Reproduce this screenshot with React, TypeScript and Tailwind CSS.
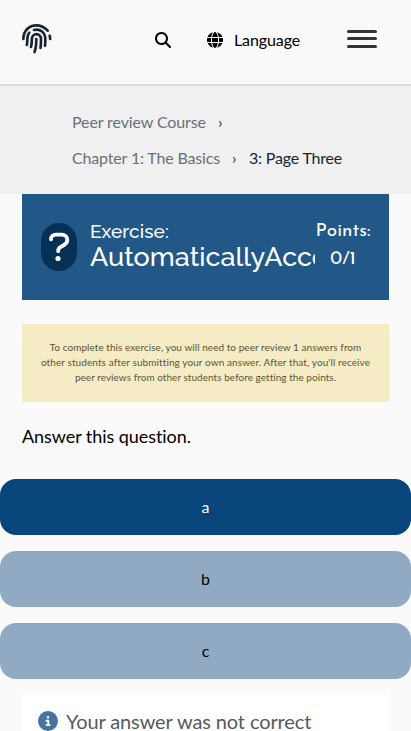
import { FaMagnifyingGlass, FaGlobe, FaCircleInfo } from "react-icons/fa6";

const choices = [
  { label: "a", selected: true },
  { label: "b", selected: false },
  { label: "c", selected: false },
];

function Fingerprint() {
  return (
    <svg
      viewBox="63 69 93 93"
      className="mt-[23px] ml-[21px] size-[31px] text-[#1a2333]"
      fill="none"
      stroke="currentColor"
      strokeWidth="8"
      strokeLinecap="round"
      strokeLinejoin="round"
    >
      <path d="M70 117C70 92 88 76 109 76C123 76 134 82 143 92" />
      <path d="M149 107C150 110 150.500 114 150.500 117" />
      <path d="M88 98C83 104 82 110 82 117C82 125 82 129 80.500 135" />
      <path d="M102 90C121 85 136 98 136 118C136 126 136 131 135 137" />
      <path d="M93 141C95 134 95.500 127 95.500 118C95.500 97 123 97 123 118C123 129 123 136 121.500 144" />
      <path d="M109 117C109 134 108 145 103.500 156" />
    </svg>
  );
}

function Header() {
  return (
    <header className="flex h-[86px] items-start border-b-2 border-[#dcdcdc] bg-[#f9f9f9] text-black">
      <Fingerprint />
      <FaMagnifyingGlass className="mt-8 ml-[103px] size-4" />
      <div className="mt-7 ml-9 flex h-6 items-center">
        <FaGlobe className="size-4" />
        <span className="ml-[11px] w-[66px] tracking-[-0.1px] whitespace-nowrap">Language</span>
      </div>
      <div className="mt-[30px] ml-[47px] flex w-[30px] flex-col">
        <span className="h-[3px] rounded-full bg-[#333333]" />
        <span className="mt-1 h-[3px] rounded-full bg-[#333333]" />
        <span className="mt-[5px] h-[3px] rounded-full bg-[#333333]" />
      </div>
    </header>
  );
}

function Breadcrumbs() {
  return (
    <nav className="h-[108px] bg-[#f0f0f0] pt-[18px] pl-[72px] leading-9 text-[#687078]">
      <div className="flex">
        <span className="w-[134px] tracking-[-0.11px] whitespace-nowrap">Peer review Course</span>
        <span className="ml-3 text-[#333]">›</span>
      </div>
      <div className="flex">
        <span className="w-[148px] tracking-[-0.16px] whitespace-nowrap">Chapter 1: The Basics</span>
        <span className="ml-3 w-[5px] text-[#333]">›</span>
        <span className="ml-3 tracking-[-0.19px] whitespace-nowrap text-[#1a2333]">3: Page Three</span>
      </div>
    </nav>
  );
}

function ExerciseHeader() {
  return (
    <div className="mx-[22px] flex h-[106px] bg-[#215887] text-white">
      <div className="mt-[29px] ml-[19px] flex h-12 w-9 shrink-0 items-center justify-center rounded-[18px] bg-[#063157]">
        <svg viewBox="0 0 36 48" className="h-12 w-9" fill="none">
          <path
            d="M10 16.3C10 13.5 12 11.7 15 11.7H20.5C24 11.7 26.3 13.7 26.3 17C26.3 19.5 25.2 20.8 23 22L19 24.3C17.7 25.1 17.2 26 17.2 28.2"
            stroke="white"
            strokeWidth="3.8"
            strokeLinecap="round"
            strokeLinejoin="round"
          />
          <circle cx="17" cy="35.5" r="2.6" fill="white" />
        </svg>
      </div>
      <div className="ml-[13px] w-[225px] shrink-0 overflow-hidden pt-[24px] font-[Raleway,Lato,sans-serif] font-medium">
        <div className="text-[19px] leading-[26px] tracking-[0.1px]">Exercise:</div>
        <div className="text-[27px] leading-[26px] tracking-[0.03px] whitespace-nowrap">AutomaticallyAcce</div>
      </div>
      <div className="w-[56px] shrink-0 pt-[26px] text-center font-['Josefin_Sans',Lato,sans-serif] text-[19px] leading-6 whitespace-nowrap">
        <div>Points:</div>
        <div className="mt-1">0/1</div>
      </div>
    </div>
  );
}

export default function App() {
  return (
    <div className="h-[731px] w-[411px] overflow-hidden bg-[#fafafa] font-[Lato,sans-serif] text-base [font-variant-ligatures:none]">
      <Header />
      <Breadcrumbs />
      <ExerciseHeader />
      <div className="mx-[22px] mt-6 h-[78px] bg-[#f5ecc6] pt-4 text-center text-[10px] leading-[15px] whitespace-nowrap text-[#5c5433]">
        <p className="tracking-[0.05px]">To complete this exercise, you will need to peer review 1 answers from</p>
        <p className="tracking-[0.095px]">other students after submitting your own answer. After that, you'll receive</p>
        <p className="tracking-[0.04px]">peer reviews from other students before getting the points.</p>
      </div>
      <p className="mt-[19px] ml-[22px] text-[18px] leading-[30px] tracking-[-0.06px] text-black">Answer this question.</p>
      <div className="mt-7 flex flex-col gap-4">
        {choices.map((c) => (
          <button
            key={c.label}
            className={
              c.selected
                ? "h-14 w-full rounded-2xl bg-[#08457a] text-white"
                : "h-14 w-full rounded-2xl bg-[#91aac4] text-black"
            }
          >
            {c.label}
          </button>
        ))}
      </div>
      <div className="mx-[22px] mt-[15px] flex h-16 bg-white pt-4 pl-4">
        <FaCircleInfo className="mt-[1px] size-5 text-[#44749f]" />
        <span className="-mt-px ml-2 text-[20px] leading-6 tracking-[-0.11px] text-[#565a61]">Your answer was not correct</span>
      </div>
    </div>
  );
}
